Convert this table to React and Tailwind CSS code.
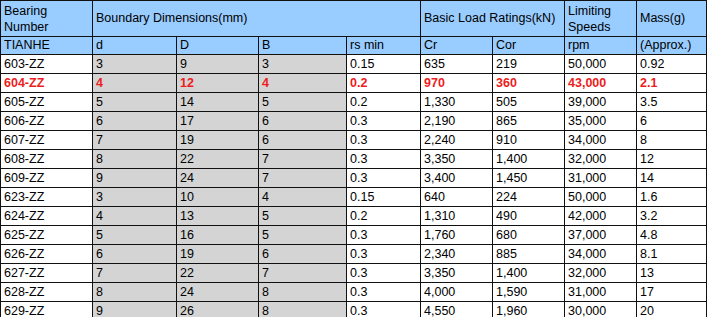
import React from 'react';

const rows = [
    ['603-ZZ', '3', '9', '3', '0.15', '635', '219', '50,000', '0.92'],
    ['604-ZZ', '4', '12', '4', '0.2', '970', '360', '43,000', '2.1'],
    ['605-ZZ', '5', '14', '5', '0.2', '1,330', '505', '39,000', '3.5'],
    ['606-ZZ', '6', '17', '6', '0.3', '2,190', '865', '35,000', '6'],
    ['607-ZZ', '7', '19', '6', '0.3', '2,240', '910', '34,000', '8'],
    ['608-ZZ', '8', '22', '7', '0.3', '3,350', '1,400', '32,000', '12'],
    ['609-ZZ', '9', '24', '7', '0.3', '3,400', '1,450', '31,000', '14'],
    ['623-ZZ', '3', '10', '4', '0.15', '640', '224', '50,000', '1.6'],
    ['624-ZZ', '4', '13', '5', '0.2', '1,310', '490', '42,000', '3.2'],
    ['625-ZZ', '5', '16', '5', '0.3', '1,760', '680', '37,000', '4.8'],
    ['626-ZZ', '6', '19', '6', '0.3', '2,340', '885', '34,000', '8.1'],
    ['627-ZZ', '7', '22', '7', '0.3', '3,350', '1,400', '32,000', '13'],
    ['628-ZZ', '8', '24', '8', '0.3', '4,000', '1,590', '31,000', '17'],
    ['629-ZZ', '9', '26', '8', '0.3', '4,550', '1,960', '30,000', '20'],
];

const subHeads = ['TIANHE', 'd', 'D', 'B', 'rs min', 'Cr', 'Cor', 'rpm', '(Approx.)'];

const cell = 'border-r border-b border-[#111] flex items-center pl-[3px] whitespace-nowrap';

const App = () => {
    return (
        <div className="w-[708px] h-[317px] overflow-hidden bg-white font-['Liberation_Sans',Arial,sans-serif] text-[12.5px] text-black">
            <div className="grid grid-cols-[92px_84px_82px_88px_74px_72px_72px_72px_70px] grid-rows-[36px_18px] auto-rows-[19px] w-[707px] border-l border-t border-[#111]">
                {/* Header */}
                <div className={`${cell} bg-[#99ccff] leading-[16px] whitespace-normal`}>Bearing<br />Number</div>
                <div className={`${cell} bg-[#99ccff] col-span-4`}>Boundary Dimensions(mm)</div>
                <div className={`${cell} bg-[#99ccff] col-span-2`}>Basic Load Ratings(kN)</div>
                <div className={`${cell} bg-[#99ccff] leading-[16px] whitespace-normal`}>Limiting<br />Speeds</div>
                <div className={`${cell} bg-[#99ccff]`}>Mass(g)</div>

                {subHeads.map((h) => (
                    <div key={h} className={`${cell} bg-[#99ccff]`}>{h}</div>
                ))}

                {/* Data rows */}
                {rows.map((r) =>
                    r.map((v, i) => {
                        const gray = i >= 1 && i <= 3;
                        const hot = r[0] === '604-ZZ';
                        return (
                            <div
                                key={r[0] + i}
                                className={`${cell} ${gray ? 'bg-[#d4d4d4]' : 'bg-white'} ${hot ? 'text-[#ee1c1c] font-bold' : ''}`}
                            >
                                {v}
                            </div>
                        );
                    })
                )}
            </div>
        </div>
    );
};

export default App;
